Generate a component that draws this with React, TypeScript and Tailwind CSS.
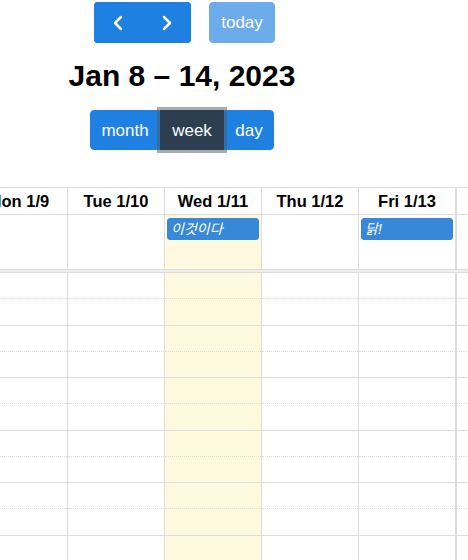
import React from 'react';
import { ChevronLeft, ChevronRight } from 'lucide-react';

// Week view columns, Mon is cut off on the left and Sat on the right
const DAYS = [
  { label: 'Mon 1/9', w: 'w-[98px]', today: false, event: '' },
  { label: 'Tue 1/10', w: 'w-[97px]', today: false, event: '' },
  { label: 'Wed 1/11', w: 'w-[97px]', today: true, event: '이것이다' },
  { label: 'Thu 1/12', w: 'w-[97px]', today: false, event: '' },
  { label: 'Fri 1/13', w: 'w-[97px]', today: false, event: '닭!' },
];

const SLOTS = Array.from({ length: 12 }, (_, i) => i);

function SlotColumn({ today, className }: { today?: boolean; className: string }) {
  return (
    <div className={`flex flex-col shrink-0 ${today ? 'bg-[#fffadf]' : 'bg-white'} ${className}`}>
      {SLOTS.map((i) => (
        <div
          key={i}
          className={`h-[26.25px] shrink-0 border-b border-[#ddd] ${i % 2 === 0 ? 'border-dotted' : 'border-solid'}`}
        />
      ))}
    </div>
  );
}

function App() {
  const btn = 'bg-[#1e80e0] border border-[#1e80e0] text-white text-[17px] leading-[25px]';

  return (
    <div className="w-[468px] h-[560px] overflow-hidden bg-white text-black font-['Liberation_Sans','Noto_Sans_CJK_KR',sans-serif]">
      {/* Toolbar */}
      <div className="w-[364px] flex flex-col items-center pt-[2px]">
        <div className="flex items-center gap-[18px] ml-[5px]">
          <div className="flex h-[41px] w-[97px] rounded-[4px] overflow-hidden">
            <button className={`${btn} flex-1 flex items-center justify-center`}>
              <ChevronLeft size={24} strokeWidth={2.5} />
            </button>
            <button className={`${btn} flex-1 flex items-center justify-center`}>
              <ChevronRight size={24} strokeWidth={2.5} />
            </button>
          </div>
          <button className={`${btn} h-[41px] w-[66px] rounded-[4px] opacity-65`}>today</button>
        </div>

        <h2 className="mt-[16px] h-[34px] text-[30px] leading-[34px] font-bold whitespace-nowrap">Jan 8 – 14, 2023</h2>

        <div className="mt-[17px] flex h-[40px]">
          <button className={`${btn} w-[70px] rounded-l-[4px]`}>month</button>
          <button className="w-[64px] bg-[#2c3e50] border border-[#2c3e50] text-white text-[17px] leading-[25px] shadow-[0_0_0_3px_rgba(76,91,106,0.5)] z-10">
            week
          </button>
          <button className={`${btn} w-[50px] rounded-r-[4px]`}>day</button>
        </div>
      </div>

      {/* Calendar grid */}
      <div className="mt-[37px] overflow-hidden">
        <div className="-ml-[30px] w-[560px]">
          {/* Column headers */}
          <div className="flex h-[28px] border-y border-[#ddd]">
            {DAYS.map((d) => (
              <div
                key={d.label}
                className={`${d.w} shrink-0 border-r border-[#ddd] flex items-center justify-center text-[16.5px] font-bold whitespace-nowrap`}
              >
                {d.label}
              </div>
            ))}
            <div className="flex-1 border-l border-[#ddd]" />
          </div>

          {/* All-day row */}
          <div className="flex h-[54px]">
            {DAYS.map((d) => (
              <div
                key={d.label}
                className={`${d.w} shrink-0 border-r border-[#ddd] pt-[3px] px-[2px] ${d.today ? 'bg-[#fffadf]' : ''}`}
              >
                {d.event && (
                  <div className="h-[22px] rounded-[3px] bg-[#3788d8] border border-[#3788d8] px-[3px] text-white italic text-[14px] leading-[20px] whitespace-nowrap overflow-hidden">
                    {d.event}
                  </div>
                )}
              </div>
            ))}
            <div className="flex-1 border-l border-[#ddd]" />
          </div>

          {/* Divider */}
          <div className="h-[4px] bg-[#eee] border-y border-[#ddd]" />

          {/* Time slots */}
          <div className="flex">
            {DAYS.map((d) => (
              <SlotColumn key={d.label} today={d.today} className={`${d.w} border-r border-[#ddd]`} />
            ))}
            <SlotColumn className="flex-1 border-l border-[#ddd]" />
          </div>
        </div>
      </div>
    </div>
  );
}

export default App;
